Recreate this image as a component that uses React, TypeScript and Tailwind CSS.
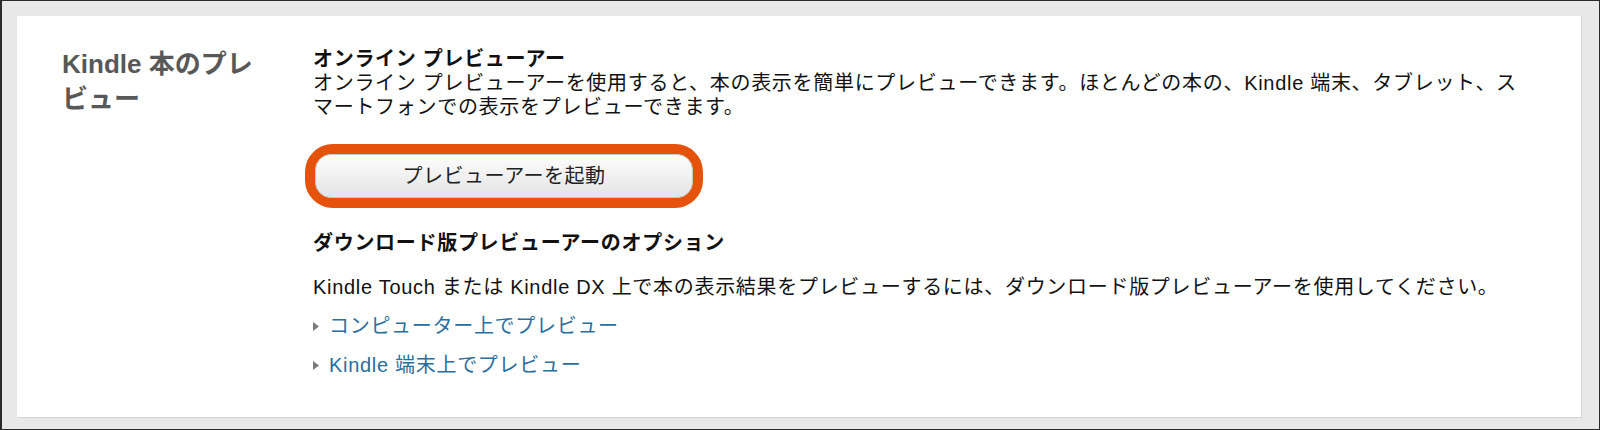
import React from 'react';

const font = 'font-["Liberation_Sans","Noto_Sans_CJK_JP",sans-serif]';

const Arrow = () => (
  <svg width="6" height="9" viewBox="0 0 6 9" className="shrink-0">
    <path d="M0 0 L6 4.5 L0 9 Z" fill="#7a7a7a" />
  </svg>
);

const PreviewLink = ({ label }: { label: string }) => (
  <div className="flex items-center gap-[10px] leading-[24px]">
    <Arrow />
    <a href="#" className="text-[#2a6e9e]">
      {label}
    </a>
  </div>
);

export default function App() {
  return (
    <div
      className={`${font} w-[1600px] h-[430px] border border-l-2 border-[#2a2a2a] bg-[#e8e8e8] pt-[15px] pl-[15px] pr-[18px] pb-[12px]`}
    >
      <div className="bg-white h-full flex pt-[31px] shadow-[1px_1px_0_#d2d2d2]">
        {/* section title */}
        <div className="w-[296px] pl-[45px] shrink-0">
          <h2 className="w-[215px] text-[26px] leading-[35px] font-bold text-[#585858]">
            Kindle 本のプレビュー
          </h2>
        </div>

        {/* online + download previewer */}
        <div className="w-[1207px] text-[20px] tracking-[0.7px] text-[#111111]">
          <h3 className="font-bold leading-[24px]">オンライン プレビューアー</h3>
          <p className="leading-[24px]">
            オンライン プレビューアーを使用すると、本の表示を簡単にプレビューできます。ほとんどの本の、Kindle
            端末、タブレット、スマートフォンでの表示をプレビューできます。
          </p>

          <div className="mt-[25px] -ml-[8px] w-[398px] h-[64px] border-[10px] border-[#e5520c] rounded-[28px]">
            <button className="w-full h-full rounded-[16px] border border-[#c9c9c9] bg-gradient-to-b from-[#fdfdfd] to-[#e4e4e4] text-[#222222] text-[20px] tracking-[0.5px]">
              プレビューアーを起動
            </button>
          </div>

          <h3 className="mt-[23px] font-bold leading-[24px]">
            ダウンロード版プレビューアーのオプション
          </h3>
          <p className="mt-[20px] leading-[24px]">
            Kindle Touch または Kindle DX
            上で本の表示結果をプレビューするには、ダウンロード版プレビューアーを使用してください。
          </p>
          <div className="mt-[15px] flex flex-col gap-[15px]">
            <PreviewLink label="コンピューター上でプレビュー" />
            <PreviewLink label="Kindle 端末上でプレビュー" />
          </div>
        </div>
      </div>
    </div>
  );
}
